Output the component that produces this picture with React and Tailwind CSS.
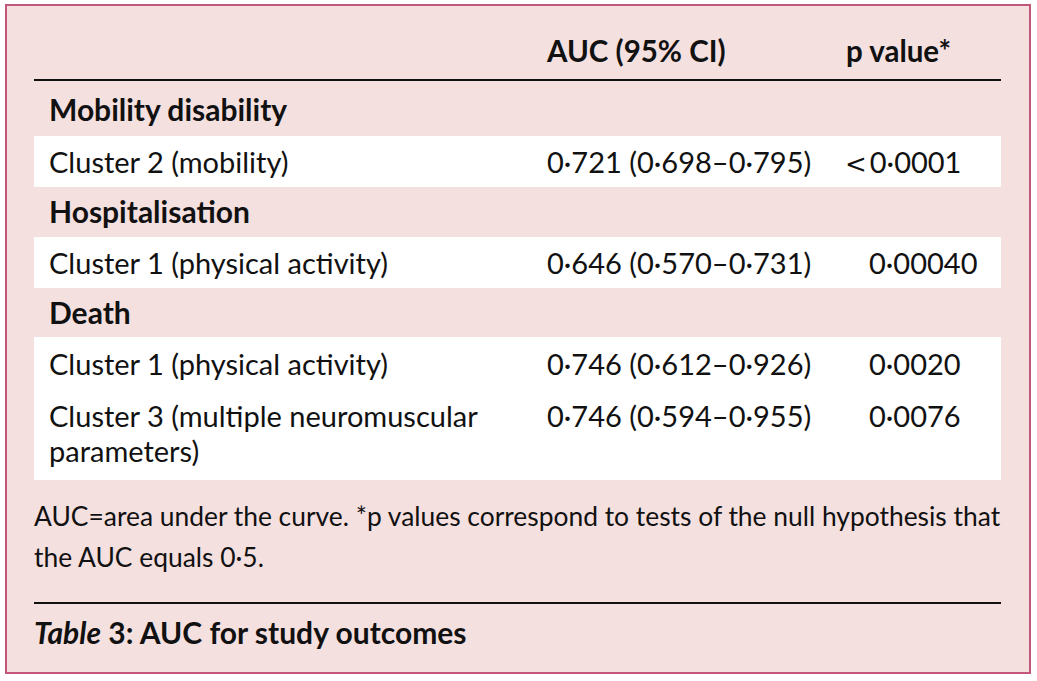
import React from "react";

const font = { fontFamily: "Lato, 'Noto Sans', sans-serif" };

function SectionRow({ label, h, pt }) {
  return (
    <div className={`${h} ${pt} pl-[15px] text-[30px] leading-[35px] font-bold text-[#111]`}>
      {label}
    </div>
  );
}

function DataRow({ label, auc, p, lt, pt, pb }) {
  return (
    <div className={`grid grid-cols-[498px_299px_169px] ${pt} ${pb} text-[29px] leading-[35px] text-[#111]`}>
      <div className="pl-[15px] pr-[20px]">{label}</div>
      <div className="pl-[15px] whitespace-nowrap">{auc}</div>
      <div className={`${lt ? "pl-[14px]" : "pl-[38px]"} whitespace-nowrap`}>
        {lt ? (
          <span className="mr-[3px] text-[26px] leading-[16px]" style={{ fontFamily: "'DejaVu Sans', sans-serif" }}>
            &lt;
          </span>
        ) : null}
        {p}
      </div>
    </div>
  );
}

export default function App() {
  return (
    <div className="w-[1037px] h-[681px] bg-white pt-[4px] pl-[5px]" style={font}>
      <div className="w-[1026px] h-[670px] border-2 border-[#c2577b] bg-[#f5e0e0] pl-[27px] pr-[28px] text-[#111]">
        {/* header */}
        <div className="grid grid-cols-[498px_299px_169px] pt-[27px] pb-[11px] border-b-2 border-[#111] text-[29.5px] leading-[35px] font-bold">
          <div></div>
          <div className="pl-[15px]">AUC (95% CI)</div>
          <div className="pl-[15px]">p value*</div>
        </div>
        <SectionRow label="Mobility disability" h="h-[55px]" pt="pt-[11px]" />
        <div className="bg-white">
          <DataRow label="Cluster 2 (mobility)" auc="0·721 (0·698–0·795)" p="0·0001" lt pt="pt-[8px]" pb="pb-[8px]" />
        </div>
        <SectionRow label="Hospitalisation" h="h-[50px]" pt="pt-[7px]" />
        <div className="bg-white">
          <DataRow label="Cluster 1 (physical activity)" auc="0·646 (0·570–0·731)" p="0·00040" pt="pt-[8px]" pb="pb-[8px]" />
        </div>
        <SectionRow label="Death" h="h-[49px]" pt="pt-[7px]" />
        <div className="bg-white">
          <DataRow label="Cluster 1 (physical activity)" auc="0·746 (0·612–0·926)" p="0·0020" pt="pt-[9px]" pb="pb-[8px]" />
          <DataRow label="Cluster 3 (multiple neuromuscular parameters)" auc="0·746 (0·594–0·955)" p="0·0076" pt="pt-[9px]" pb="pb-[12px]" />
        </div>
        {/* footnote */}
        <div className="pt-[16px] pb-[24px] border-b-2 border-[#111] text-[26.4px] leading-[41px]">
          <div className="whitespace-nowrap">AUC=area under the curve. *p values correspond to tests of the null hypothesis that</div>
          <div className="whitespace-nowrap">the AUC equals 0·5.</div>
        </div>
        <div className="pt-[11px] text-[30px] leading-[35px] font-bold">
          <span className="italic">Table</span> 3: AUC for study outcomes
        </div>
      </div>
    </div>
  );
}
